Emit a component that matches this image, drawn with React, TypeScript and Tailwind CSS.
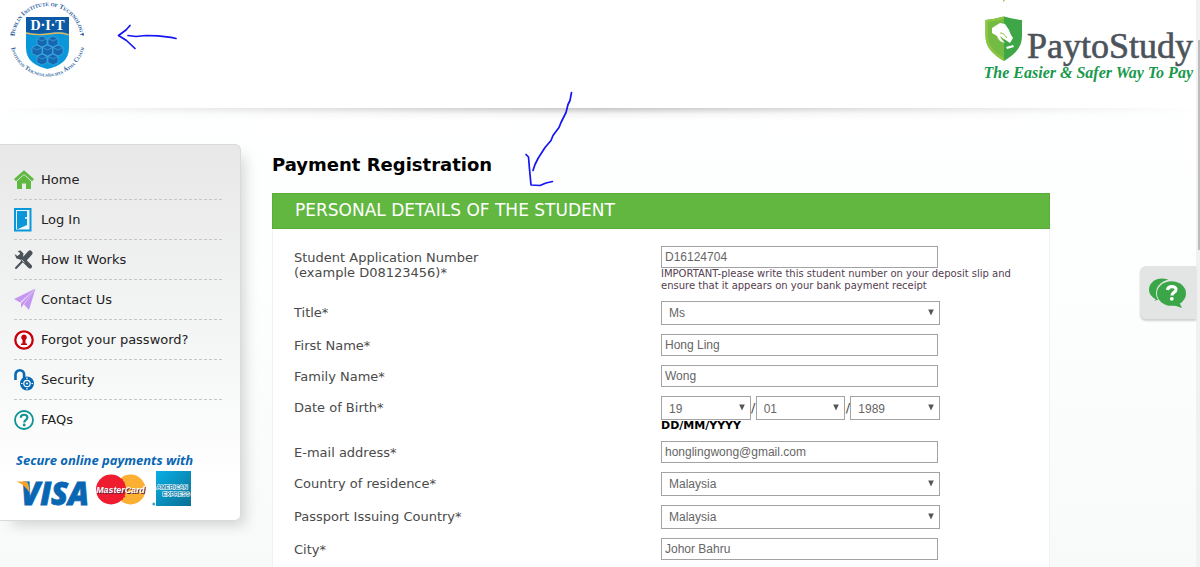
import type { ReactNode } from "react";

function DitLogo() {
  return (
    <svg width="80" height="80" viewBox="0 0 80 80" role="img" aria-label="Dublin Institute of Technology">
      <defs>
        <path id="ring-top" d="M 7.500 39 A 33 33 0 0 1 73.500 39" />
        <path id="ring-bottom" d="M 4.100 30 A 37.500 37.500 0 1 0 76.900 30" />
      </defs>
      <g className="fill-[#1c5a9c] font-['Liberation_Serif',serif]" fontWeight="700" textAnchor="middle">
        <text fontSize="6.6" style={{ fontVariant: "small-caps" }}>
          <textPath href="#ring-top" startOffset="50%">Dublin Institute of Technology</textPath>
        </text>
        <text fontSize="6.3" style={{ fontVariant: "small-caps" }}>
          <textPath href="#ring-bottom" startOffset="50%">Institiúid Teicneolaíochta Átha Cliath</textPath>
        </text>
      </g>
      <circle cx="5" cy="34.500" r="0.9" fill="#1c5a9c" />
      <circle cx="76" cy="34.500" r="0.9" fill="#1c5a9c" />
      <path d="M19 17h43v31c0 12-9 18-21.500 21C28 66 19 60 19 48z" fill="#0a97da" />
      <path d="M19 17h43v17c-8-3-13-2-21-1s-14 1-22-1z" fill="#0c5aa6" />
      <path d="M19 33c8 2 14 2 22 1s13-2 21 1" fill="none" stroke="#e6b45c" strokeWidth="1.300" />
      <text x="40.500" y="30" textAnchor="middle" fontSize="14" fontWeight="700" className="fill-white font-['Liberation_Serif',serif]">
        D·I·T
      </text>
      <g fill="#1467b0" stroke="#4fb4e4" strokeWidth="0.600">
        <path d="M35 36l5 2.500v6l-5 2.500-5-2.500v-6zM46 36l5 2.500v6l-5 2.500-5-2.500v-6zM30 45l5 2.500v6l-5 2.500-5-2.500v-6zM40.500 45l5 2.500v6l-5 2.500-5-2.500v-6zM51 45l5 2.500v6l-5 2.500-5-2.500v-6zM35 54l5 2.500v6l-5 2.500-5-2.500v-6zM46 54l5 2.500v6l-5 2.500-5-2.500v-6z" />
        <path d="M30 38.500l5 2.500 5-2.500M41 38.500l5 2.500 5-2.500M25 47.500l5 2.500 5-2.500M35.500 47.500l5 2.500 5-2.500M46 47.500l5 2.500 5-2.500M30 56.500l5 2.500 5-2.500M41 56.500l5 2.500 5-2.500" fill="none" />
      </g>
    </svg>
  );
}

function PayToStudyLogo() {
  return (
    <div className="flex flex-col items-end">
      <div className="flex items-start">
        <svg width="38" height="46" viewBox="0 0 38 46" aria-hidden="true">
          <path d="M0.500 4Q10 3 19 0.500Q28 3 37 4V20C37 32 29 39 19 45C9 39 0.500 32 0.500 20z" fill="#3fa648" />
          <path d="M19 0.500Q10 3 0.500 4V20C0.500 32 9 39 19 45z" fill="#8cc63f" />
          <path d="M3 6Q11 5 19 3V42C10 37 3 30 3 20z" fill="#74bb44" />
          <path d="M7 12l8-5 5 1 4 6c1 3 2 5 4 8l-3 5-6-4-4-3c1 3 3 5 5 7l-3-1c-3-1-4-4-5-6l-5-3z" fill="#fff" />
          <path d="M21 31l7-2 1 2-7 2z" fill="#fff" />
          <path d="M15 17c3 0 5 2 7 5" fill="none" stroke="#8cc63f" strokeWidth="1" />
        </svg>
        <span className="pt-3 pl-1 font-['Liberation_Serif',serif] text-[36px] leading-[36px] text-[#4c535a] [-webkit-text-stroke:0.6px_#4c535a]">
          PaytoStudy
        </span>
      </div>
      <span className="font-['Liberation_Serif',serif] text-[16px] leading-[18px] font-bold text-[#18994b] italic">
        The Easier &amp; Safer Way To Pay
      </span>
    </div>
  );
}

const HomeIcon = (
  <svg width="20" height="20" viewBox="0 0 20 20" aria-hidden="true">
    <path d="M3 10.500l7-6 7 6V19h-5v-5.500H8V19H3z" fill="#5fb840" />
    <path d="M0.800 10.500L10 2.200l9.200 8.300" fill="none" stroke="#eaeaea" strokeWidth="4" />
    <path d="M1 10.200L10 2.200l9 8" fill="none" stroke="#5fb840" strokeWidth="2.900" />
  </svg>
);
const DoorIcon = (
  <svg width="18" height="24" viewBox="0 0 18 24" aria-hidden="true">
    <rect x="1" y="1" width="15.500" height="21.500" fill="#eef5f9" stroke="#0a97da" strokeWidth="2" />
    <path d="M3 3h10v14L4 21H3z" fill="#0a97da" />
    <path d="M12 9v2" stroke="#fff" strokeWidth="1.500" />
  </svg>
);
const ToolsIcon = (
  <svg width="19" height="20" viewBox="0 0 19 20" aria-hidden="true">
    <path d="M16 16.500L6 6.500" stroke="#4a525a" strokeWidth="4" strokeLinecap="round" />
    <path d="M0.500 4l3 2 2-1 0.500-2L3.500 1l3-0.500 3 3-0.500 3.500-3 2.500-3.500-1z" fill="#4a525a" />
    <path d="M2 18l8.500-9" stroke="#4a525a" strokeWidth="2" strokeLinecap="round" />
    <path d="M11 8.500l5-5.500" stroke="#4a525a" strokeWidth="5" strokeLinecap="round" />
    <path d="M7.500 9.500l3 3" stroke="#ececec" strokeWidth="0.800" />
  </svg>
);
const PlaneIcon = (
  <svg width="22" height="23" viewBox="0 0 22 23" aria-hidden="true">
    <path d="M21.500 0.500L0 11l6 3.500zM21.500 0.500L7 15v5l2.500-3.500z" fill="#c597f2" />
    <path d="M21.500 0.500L10 16.500l5 5.500z" fill="#c597f2" />
  </svg>
);
const KeyholeIcon = (
  <svg width="20" height="20" viewBox="0 0 20 20" aria-hidden="true">
    <circle cx="10" cy="10" r="8.700" fill="#fff" stroke="#c8000b" strokeWidth="2.300" />
    <path d="M10 4.500a3 3 0 0 1 1.500 5.500v3.500H13v1.500H7v-1.500h1.500V10A3 3 0 0 1 10 4.500z" fill="#c8000b" />
  </svg>
);
const LockIcon = (
  <svg width="20" height="23" viewBox="0 0 20 23" aria-hidden="true">
    <path d="M1.500 12V6.500a4.300 4.300 0 0 1 8.600 0V11" fill="none" stroke="#0669b4" strokeWidth="2.600" />
    <circle cx="13" cy="15.500" r="7" fill="#0669b4" />
    <circle cx="13" cy="15.500" r="3.200" fill="none" stroke="#fff" strokeWidth="1.200" />
    <circle cx="13" cy="15.500" r="1" fill="#fff" />
    <path d="M13 9.500v1.500M13 20v1.500M7 15.500h1.500M17.500 15.500H19" stroke="#fff" strokeWidth="1.200" />
  </svg>
);
const QuestionIcon = (
  <svg width="20" height="20" viewBox="0 0 20 20" aria-hidden="true">
    <circle cx="10" cy="10" r="9" fill="#fff" stroke="#0d9493" strokeWidth="1.800" />
    <path d="M6.800 7.800c0-4 6.600-4 6.600-0.300 0 2.500-3.200 2.300-3.200 5" fill="none" stroke="#0d9493" strokeWidth="2.200" />
    <circle cx="10.200" cy="15" r="1.400" fill="#0d9493" />
  </svg>
);

const menu: { label: string; icon: ReactNode }[] = [
  { label: "Home", icon: HomeIcon },
  { label: "Log In", icon: DoorIcon },
  { label: "How It Works", icon: ToolsIcon },
  { label: "Contact Us", icon: PlaneIcon },
  { label: "Forgot your password?", icon: KeyholeIcon },
  { label: "Security", icon: LockIcon },
  { label: "FAQs", icon: QuestionIcon },
];

function Visa() {
  return (
    <svg className="overflow-visible" width="74" height="26" viewBox="0 0 74 26" role="img" aria-label="Visa">
      <text
        x="5"
        y="24.500"
        fontSize="31"
        fontWeight="800"
        fontStyle="italic"
        fill="#0866b3"
        stroke="#0866b3"
        strokeWidth="0.800"
        className="font-['Open_Sans',sans-serif]"
      >
        VISA
      </text>
      <path d="M0.500 1.500H9q3 0 3.600 3.500l1.200 8Q9 5 0.500 1.500z" fill="#f5a428" />
    </svg>
  );
}

function MasterCard() {
  return (
    <svg width="50" height="32" viewBox="0 0 50 32" role="img" aria-label="MasterCard">
      <circle cx="34.500" cy="15.500" r="15" fill="#fbb034" />
      <circle cx="15" cy="15.500" r="15" fill="#ee1c2e" />
      <path d="M22 6h5M20.500 8.500h8M20 22.500h9M21 25h6" stroke="#ee1c2e" strokeWidth="1.300" />
      <text
        x="24.500"
        y="18.500"
        textAnchor="middle"
        fontSize="8.800"
        fontWeight="700"
        fontStyle="italic"
        fill="#fff"
        className="font-['Liberation_Sans',sans-serif] [text-shadow:1px_1px_0_#5b2340]"
      >
        MasterCard
      </text>
    </svg>
  );
}

function Amex() {
  return (
    <svg width="40" height="35" viewBox="0 0 40 35" role="img" aria-label="American Express">
      <defs>
        <linearGradient id="amex" x1="0" y1="0" x2="1" y2="1">
          <stop offset="0" stopColor="#08b0e6" />
          <stop offset="1" stopColor="#0a6f93" />
        </linearGradient>
      </defs>
      <rect x="4" width="35" height="35" fill="url(#amex)" />
      <circle cx="1.800" cy="33" r="1.500" fill="#3aa5cf" />
      <g fontSize="5.800" fontWeight="700" fill="#0b7fab" stroke="#fff" strokeWidth="1.200" style={{ paintOrder: "stroke" }} className="font-['Liberation_Sans',sans-serif]">
        <text x="4.500" y="18">AMERICAN</text>
        <text x="10.500" y="25">EXPRESS</text>
      </g>
    </svg>
  );
}

function Sidebar() {
  return (
    <aside className="mt-6 w-[241px] shrink-0 self-start rounded-r-md border border-l-0 border-[#d9dbdb] bg-linear-to-b from-[#e8e8e8] via-[#f5f6f6] via-55% to-white to-90% pt-[15px] pr-4.5 pb-3.5 pl-3.5 shadow-[8px_8px_14px_-4px_rgba(0,0,0,0.16)]">
      <nav>
        <ul>
          {menu.map((m) => (
            <li key={m.label} className="h-10 border-b border-dashed border-[#c6c6c6] last:border-b-0">
              <a href="#" className="flex h-full items-center text-[13px] text-[#222]">
                <span className="flex w-[27px] shrink-0">{m.icon}</span>
                {m.label}
              </a>
            </li>
          ))}
        </ul>
      </nav>
      <p className="pt-[11px] pl-0.5 font-['Open_Sans',sans-serif] text-[13px] leading-[18px] font-bold whitespace-nowrap text-[#0866b3] italic">
        Secure online payments with
      </p>
      <div className="flex items-end gap-1.5 pt-0.5 pl-0.5">
        <Visa />
        <MasterCard />
        <Amex />
      </div>
    </aside>
  );
}

function Row({ id, label, children }: { id: string; label: ReactNode; children: ReactNode }) {
  return (
    <div className="flex items-start">
      <label htmlFor={id} className="w-[367px] shrink-0 pt-1 text-[13px] leading-[15px] text-[#4a4a4a]">
        {label}
      </label>
      <div className="min-w-0">{children}</div>
    </div>
  );
}

function TextBox({ id, value, type = "text" }: { id: string; value: string; type?: string }) {
  return (
    <input
      id={id}
      type={type}
      defaultValue={value}
      className="block h-[22px] w-[277px] border border-[#a3a3a3] bg-white px-[3px] font-['Liberation_Sans',sans-serif] text-[12px] text-[#666]"
    />
  );
}

function Picker({ id, options, label }: { id: string; options: string[]; label?: string }) {
  return (
    <div className="relative min-w-0 flex-1">
      <select
        id={id}
        aria-label={label}
        className="block h-6 w-full appearance-none border border-[#a3a3a3] bg-white px-[7px] font-['Liberation_Sans',sans-serif] text-[12px] text-[#666]"
      >
        {options.map((o) => (
          <option key={o}>{o}</option>
        ))}
      </select>
      <svg className="pointer-events-none absolute top-2 right-1.5" width="6" height="7" viewBox="0 0 6 7" aria-hidden="true">
        <path d="M0.200 0.500h5.600L3 6.500z" fill="#555" />
      </svg>
    </div>
  );
}

export default function App() {
  return (
    <div className="flex min-h-screen bg-white font-['DejaVu_Sans',Verdana,sans-serif]">
      <div className="relative flex min-w-0 flex-1 flex-col bg-linear-to-b from-white via-[#fdfefe] to-[#f8faf9]">
        <header className="flex h-[108px] items-start justify-between bg-white pl-[7px] pr-[3px]">
          <DitLogo />
          <div className="pt-4">
            <PayToStudyLogo />
          </div>
        </header>
        <div className="h-3 shrink-0 bg-linear-to-b from-[#c6c6c6] via-[#f4f4f4] via-50% to-transparent [mask-image:linear-gradient(to_right,transparent,black_50%,transparent)]" />

        <div className="flex flex-1">
          <Sidebar />
          <main className="flex min-w-0 flex-1 flex-col pt-[33px] pr-[146px] pl-[31px]">
            <h1 className="mb-4 text-[18px] leading-6 font-bold text-black">Payment Registration</h1>
            <h2 className="flex h-9 shrink-0 items-center border border-[#57ad38] bg-[#61b740] px-[22px] text-[17px] text-white">
              PERSONAL DETAILS OF THE STUDENT
            </h2>
            <form className="flex flex-1 flex-col gap-[9px] border-x border-[#f0f2f1] bg-white px-[21px] pt-[17px]">
              <Row id="app" label={<>Student Application Number<br />(example D08123456)*</>}>
                <TextBox id="app" value="D16124704" />
                <p className="w-[364px] text-[10px] leading-[12px] text-[#54404f]">
                  IMPORTANT-please write this student number on your deposit slip and ensure that it appears on your bank payment receipt
                </p>
              </Row>
              <Row id="title" label="Title*">
                <div className="flex w-[279px]"><Picker id="title" options={["Ms", "Mr", "Mrs"]} /></div>
              </Row>
              <Row id="first" label="First Name*"><TextBox id="first" value="Hong Ling" /></Row>
              <Row id="family" label="Family Name*"><TextBox id="family" value="Wong" /></Row>
              <Row id="day" label="Date of Birth*">
                <div className="flex w-[279px] items-center text-[13px] leading-6 text-[#4a4a4a]">
                  <Picker id="day" options={["19"]} />
                  <span className="w-[5px] text-center">/</span>
                  <Picker id="month" label="Month" options={["01"]} />
                  <span className="w-[5px] text-center">/</span>
                  <Picker id="year" label="Year" options={["1989"]} />
                </div>
                <p className="text-[11px] leading-[12px] font-bold text-black">DD/MM/YYYY</p>
              </Row>
              <Row id="email" label="E-mail address*"><TextBox id="email" type="email" value="honglingwong@gmail.com" /></Row>
              <Row id="country" label="Country of residence*">
                <div className="flex w-[279px]"><Picker id="country" options={["Malaysia"]} /></div>
              </Row>
              <Row id="passport" label="Passport Issuing Country*">
                <div className="flex w-[279px]"><Picker id="passport" options={["Malaysia"]} /></div>
              </Row>
              <Row id="city" label="City*"><TextBox id="city" value="Johor Bahru" /></Row>
            </form>
          </main>
        </div>

        <button
          type="button"
          aria-label="Help"
          className="absolute top-[266px] right-0 flex h-[53px] w-14 items-center rounded-l-md bg-[#e3e5e4] pl-[9px] shadow-[0_2px_2px_rgba(0,0,0,0.18)]"
        >
          <svg width="38" height="32" viewBox="0 0 38 32" aria-hidden="true">
            <ellipse cx="13" cy="12.500" rx="13" ry="11" fill="#3ba648" />
            <path d="M4 18l4 3-3 3 8-3z" fill="#3ba648" />
            <ellipse cx="22.500" cy="16" rx="15.500" ry="13.500" fill="#e3e5e4" />
            <ellipse cx="22.500" cy="16.500" rx="14.500" ry="12.300" fill="#3ba648" />
            <path d="M24 28l9 3-3-6z" fill="#3ba648" />
            <path d="M18.500 13c0.500-4.500 8.500-4.500 8.500-0.500 0 3-4 2.500-4 6" fill="none" stroke="#fff" strokeWidth="3.200" />
            <circle cx="22.800" cy="21.800" r="1.900" fill="#fff" />
          </svg>
        </button>

        <svg className="pointer-events-none absolute top-5 left-[114px]" width="68" height="34" viewBox="114 20 68 34" aria-hidden="true">
          <path d="M176 38.500l-5-1.200-13-1.500-12-0.300-10 1-8-1M130 25.500l-4 4.500-7.500 5.500 8 5 8.500 8" fill="none" stroke="#1414f5" strokeWidth="1.700" strokeLinecap="round" strokeLinejoin="round" />
        </svg>
        <svg className="pointer-events-none absolute top-[88px] left-[520px]" width="60" height="104" viewBox="520 88 60 104" aria-hidden="true">
          <path d="M571.500 92.500l-1.500 8-2 4-2 8-5 10-2 5-6 8-2 5-6 7-7 11-3 6-2 6M526 154.500l2.500 2.500 1 12 1.500 16 9 0.500 6-2.500 6.500-1.500" fill="none" stroke="#1414f5" strokeWidth="1.700" strokeLinecap="round" strokeLinejoin="round" />
        </svg>
        <svg className="pointer-events-none absolute top-0 right-[190px]" width="4" height="2" viewBox="0 0 4 2" aria-hidden="true">
          <path d="M1 0h2L1.500 2z" fill="#8cc63f" />
        </svg>
      </div>

      <div className="w-1 shrink-0 bg-[#f1f1f1] pt-10 pl-0.5" aria-hidden="true">
        <div className="h-[210px] bg-[#bcbcbc]" />
      </div>
    </div>
  );
}
